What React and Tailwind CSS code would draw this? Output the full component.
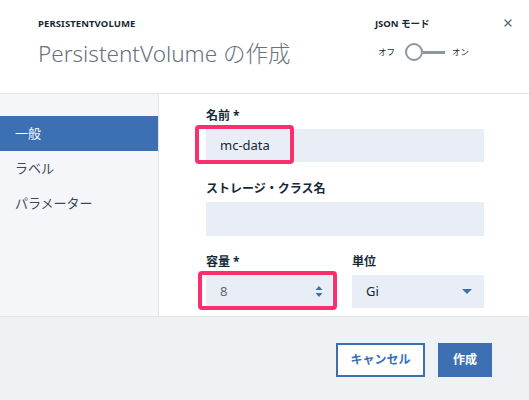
import { X } from 'lucide-react'

const font = { fontFamily: '"Noto Sans", "Noto Sans CJK JP", sans-serif' }

function Field({ label, children, className = '' }) {
  return (
    <div className={className}>
      <div className="h-4 text-[12px] font-bold leading-4 text-[#152935]">{label}</div>
      <div className="mt-[5px]">{children}</div>
    </div>
  )
}

export default function App() {
  return (
    <div style={font} className="flex h-[400px] w-[529px] flex-col overflow-hidden bg-white">
      <header className="relative flex h-[94px] shrink-0 border-b border-[#dfe3e6] px-[38px]">
        <div className="flex-1 pt-[18px]">
          <div className="text-[9.5px] font-bold leading-3 tracking-[0.1px] text-[#152935]">PERSISTENTVOLUME</div>
          <h1 className="mt-[10px] text-[22.5px] font-light leading-7 text-[#66737e]">PersistentVolume の作成</h1>
        </div>
        <div className="mr-[22px] shrink-0 whitespace-nowrap pt-[18px]">
          <div className="text-[9.5px] font-bold leading-3 text-[#152935]">JSON モード</div>
          <div className="mt-[13px] flex items-center text-[8.5px] text-[#152935]">
            <span className="ml-[3px]">オフ</span>
            <span className="ml-[10px] flex items-center">
              <span className="h-[18px] w-[18px] rounded-full border-2 border-[#8897a2] bg-white" />
              <span className="h-[3px] w-[22px] bg-[#8897a2]" />
            </span>
            <span className="ml-[7px]">オン</span>
          </div>
        </div>
        <X className="absolute top-[17px] right-[15px] h-[12px] w-[12px] text-[#5a6872]" strokeWidth={2.5} />
      </header>

      <div className="flex flex-1">
        <nav className="w-[159px] shrink-0 border-r border-[#e3e6ea] bg-[#f4f6fa] pt-[22px] text-[13px] text-[#3d4a55]">
          <div className="flex h-[35px] items-center bg-[#3d70b2] pl-[15px] text-white">一般</div>
          <div className="flex h-[35px] items-center pl-[15px]">ラベル</div>
          <div className="flex h-[35px] items-center pl-[15px]">パラメーター</div>
        </nav>

        <main className="relative flex-1 pt-[14px] pl-[47px] pr-[45px]">
          <Field label="名前 *">
            <div className="relative">
              <div className="flex h-[33px] items-center bg-[#e9eef6] pl-[14px] text-[13px] text-[#152935]">mc-data</div>
              <div className="absolute -top-[4px] -left-[11px] h-[39px] w-[99px] rounded-[4px] border-4 border-[#fb2f6d]" />
            </div>
          </Field>
          <Field label="ストレージ・クラス名" className="mt-[19px]">
            <div className="h-[34px] bg-[#e9eef6]" />
          </Field>
          <div className="mt-[18px] flex gap-[20px]">
            <Field label="容量 *" className="w-[126px]">
              <div className="relative">
                <div className="flex h-[33px] items-center justify-between bg-[#e9eef6] pr-[9px] pl-[14px] text-[13px] text-[#5a6872]">
                  <span>8</span>
                  <svg width="8" height="13" viewBox="0 0 8 13" className="fill-[#3d70b2]">
                    <path d="M4 1 L7.5 5 H0.5 Z" />
                    <path d="M4 12 L7.5 8 H0.5 Z" />
                  </svg>
                </div>
                <div className="absolute -top-[4px] -left-[8px] h-[39px] w-[139px] rounded-[4px] border-4 border-[#fb2f6d]" />
              </div>
            </Field>
            <Field label="単位" className="flex-1">
              <div className="flex h-[33px] items-center justify-between bg-[#e9eef6] pr-[12px] pl-[14px] text-[13px] text-[#152935]">
                <span>Gi</span>
                <svg width="10" height="5" viewBox="0 0 10 5" className="fill-[#3d70b2]">
                  <path d="M0 0 H10 L5 5 Z" />
                </svg>
              </div>
            </Field>
          </div>
        </main>
      </div>

      <footer className="flex h-[84px] shrink-0 items-start justify-end gap-[13px] border-t border-[#dfe3e6] bg-[#eff2f5] pt-[26px] pr-[37px]">
        <button className="h-[34px] w-[89px] border-2 border-[#3d70b2] bg-white text-[12px] font-bold text-[#3d70b2]">キャンセル</button>
        <button className="h-[34px] w-[54px] bg-[#3d70b2] text-[12px] font-bold text-white">作成</button>
      </footer>
    </div>
  )
}
